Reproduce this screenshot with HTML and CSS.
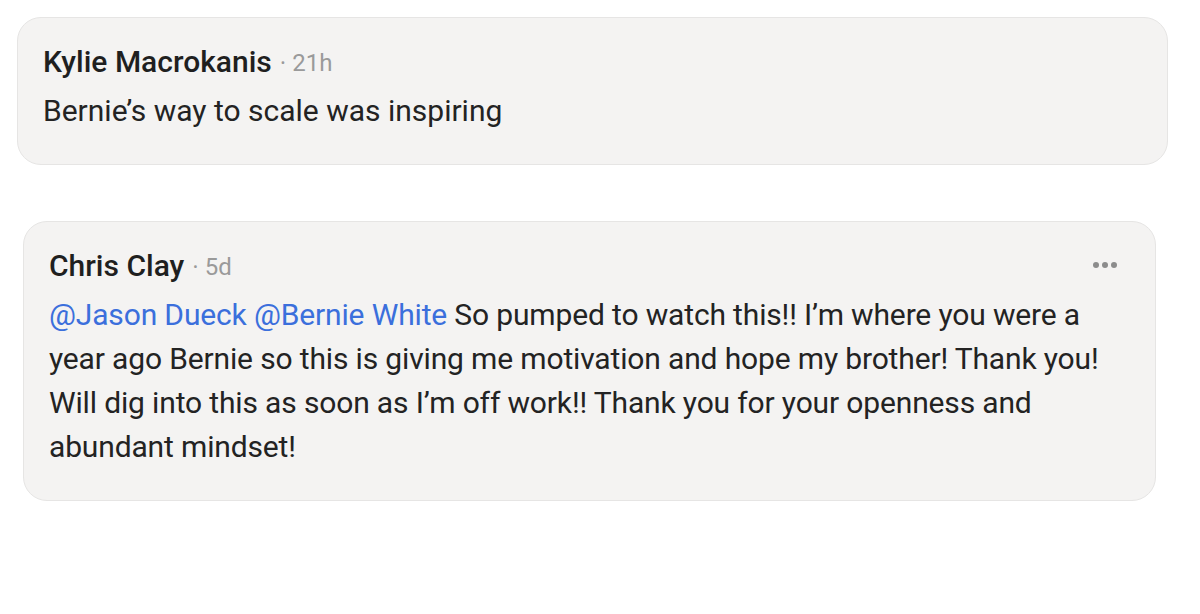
FILE: index.html
```html
<html>
    <head>
        <link rel="stylesheet" href="styles.css">
    </head>
    <body>
        <div class="comment first">
            <div class="meta">
                <span class="author">Kylie Macrokanis</span>
                <span class="dot">•</span>
                <span class="time">21h</span>
            </div>
            <p class="text">Bernie’s way to scale was inspiring</p>
        </div>

        <div class="comment second">
            <div class="meta">
                <span class="author">Chris Clay</span>
                <span class="dot">•</span>
                <span class="time">5d</span>
                <span class="more"><i></i><i></i><i></i></span>
            </div>
            <p class="text"><span class="mention">@Jason Dueck @Bernie White</span> So pumped to watch this!! I’m where you were a year ago Bernie so this is giving me motivation and hope my brother! Thank you! Will dig into this as soon as I’m off work!! Thank you for your openness and abundant mindset!</p>
        </div>
    </body>
</html>
```

FILE: styles.css
```css
body
{
    margin: 0;
    padding-top: 17px;
    background: #ffffff;
    font-family: Roboto, "Liberation Sans", sans-serif;
    color: #222222;
}

.comment
{
    box-sizing: border-box;
    background: #f4f3f2;
    border: 1px solid #e6e5e4;
    border-radius: 24px;
    padding: 25px 36px 31px 25px;
}

.first
{
    margin-left: 17px;
    width: 1151px;
}

.second
{
    margin-left: 23px;
    margin-top: 56px;
    width: 1133px;
}

.second .text
{
    letter-spacing: -0.15px;
}

.meta
{
    display: flex;
    align-items: center;
    height: 36px;
}

.author
{
    font-size: 30px;
    font-weight: 500;
    color: #1f1f1f;
}

.dot
{
    font-size: 13px;
    color: #9a9a9a;
    margin: 3px 7px 0 9px;
}

.time
{
    font-size: 24px;
    color: #9a9a9a;
    margin-top: 4px;
}

.more
{
    margin-left: auto;
    margin-right: 2px;
    display: flex;
    gap: 3px;
}

.more i
{
    width: 6px;
    height: 6px;
    border-radius: 50%;
    background: #8c8c8c;
}

.text
{
    margin: 10px 0 0 0;
    font-size: 30px;
    line-height: 44px;
    color: #232323;
}

.mention
{
    color: #3b6fdc;
}
```
